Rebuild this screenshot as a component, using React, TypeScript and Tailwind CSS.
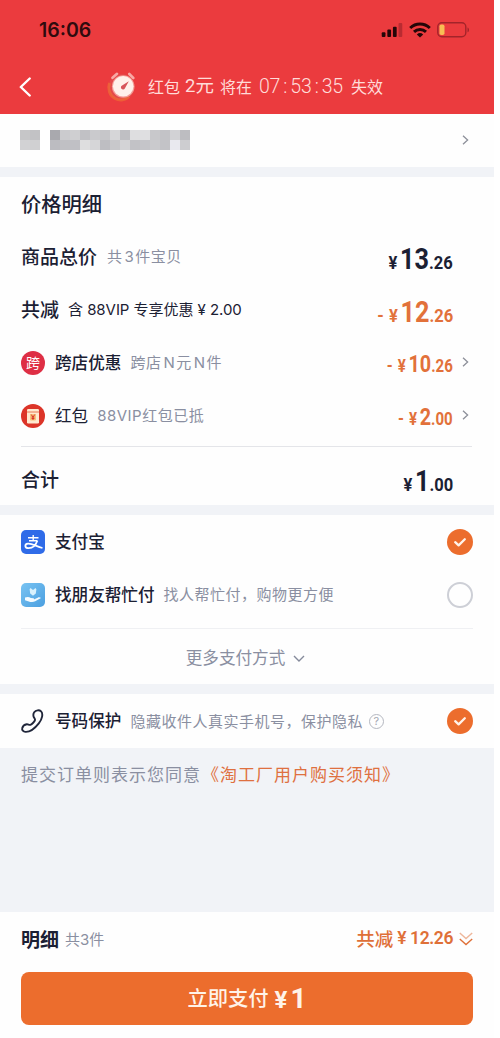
import type { ReactNode } from "react";

const MOSAIC = [
  ["#c6c6c8", "#c2c2c5", "#ffffff", "#a9a9ae", "#cbcbce", "#cfcfd1", "#c1c1c5", "#cacacd", "#c6c6c9", "#d6d6d8", "#bfbfc3", "#dedee0", "#dfdfe1", "#c8c8cb", "#c3c3c7", "#d2d2d5", "#bdbdc1"],
  ["#d2d2d4", "#d0d0d2", "#ffffff", "#bcbcc1", "#c0c0c4", "#c0c0c5", "#dededf", "#d6d6d8", "#bebec2", "#c8c8cb", "#d3d3d6", "#c2c2c6", "#c5c5c9", "#cacacd", "#c3c3c7", "#e9e9ef", "#cdcdd0"],
];

export default function App() {
  return (
    <div className="min-h-[1038px] w-[500px] bg-white font-['Inter','Noto_Sans_CJK_SC',sans-serif] text-[#1b2033]">
      <div className="flex h-[1038px] w-[494px] flex-col bg-[#f1f3f7]">
        <Header />

        {/* Address */}
        <div className="flex h-[53px] shrink-0 items-center justify-between bg-[#fefefe] pl-5 pr-[25px]">
          <div className="mb-0.5 grid grid-cols-[repeat(17,10px)]">
            {MOSAIC.flat().map((color, i) => (
              <div key={i} className="h-2.5" style={{ backgroundColor: color }} />
            ))}
          </div>
          <ChevronRight />
        </div>

        {/* Price details */}
        <section className="mt-2.5 h-[328px] shrink-0 bg-[#fefefe] pl-[21px] pr-[22px]">
          <div className="flex h-[53px] items-center pt-[3px] text-[20.3px] font-medium leading-none">价格明细</div>
          <Row>
            <Title>商品总价</Title>
            <Sub className="ml-[10px]">共<i className="ml-0.5 mr-px not-italic">3</i>件宝贝</Sub>
            <Price whole="13" cents=".26" />
          </Row>
          <Row>
            <Title>共减</Title>
            <span className="ml-[9px] whitespace-nowrap text-[15px] leading-none tracking-[-0.05px]">
              含 88VIP 专享优惠 ¥ 2.00
            </span>
            <Price minus whole="12" cents=".26" />
          </Row>
          <Row>
            <span className="flex size-6 items-center justify-center rounded-full bg-[#de2f45] text-[14px] leading-none text-white">
              跨
            </span>
            <Name>跨店优惠</Name>
            <Sub>跨店<i className="ml-0.5 mr-px not-italic">N</i>元<i className="ml-0.5 mr-px not-italic">N</i>件</Sub>
            <Price small minus arrow whole="10" cents=".26" />
          </Row>
          <Row>
            <RedPacketIcon />
            <Name regular>红包</Name>
            <Sub className="ml-[9px]">88VIP红包已抵</Sub>
            <Price small minus arrow whole="2" cents=".00" />
          </Row>
          <div className="mt-1 h-px bg-[#e4e5e9]" />
          <div className="flex h-[64px] items-center">
            <Title>合计</Title>
            <Price whole="1" cents=".00" />
          </div>
        </section>

        {/* Payment methods */}
        <section className="mt-2.5 h-[169px] shrink-0 bg-[#fefefe] pl-[21px] pr-[21px]">
          <Row>
            <AlipayIcon />
            <Name>支付宝</Name>
            <Checked />
          </Row>
          <Row>
            <FriendPayIcon />
            <Name>找朋友帮忙付</Name>
            <Sub>找人帮忙付，购物更方便</Sub>
            <span className="ml-auto size-[26px] rounded-full border-2 border-[#cdcfd6]" />
          </Row>
          <div className="mt-[7px] h-px bg-[#eff0f3]" />
          <div className="flex h-[59px] items-center justify-center pr-[3px] text-[16.6px] leading-none text-[#8a8fa1]">
            更多支付方式
            <svg className="ml-2 h-[7px] w-3" viewBox="0 0 12 7" fill="none" stroke="#858a9b" strokeWidth="1.4">
              <path d="M1 1l5 5 5-5" />
            </svg>
          </div>
        </section>

        {/* Number protection */}
        <section className="mt-2.5 flex h-[54px] shrink-0 items-center bg-[#fefefe] px-[21px]">
          <PhoneIcon />
          <Name>号码保护</Name>
          <Sub>隐藏收件人真实手机号，保护隐私</Sub>
          <span className="ml-[6px] flex size-[15px] shrink-0 items-center justify-center rounded-full border border-[#b4b7c0] text-[11px] leading-none text-[#a4a8b3]">
            ?
          </span>
          <Checked />
        </section>

        <p className="mt-[18px] flex whitespace-nowrap pl-[21px] text-[17px] leading-[18px] tracking-[1px] text-[#8a8fa1]">
          提交订单则表示您同意
          <span className="ml-px text-[#df7040]">《淘工厂用户购买须知》</span>
        </p>

        <Footer />
      </div>
    </div>
  );
}

function Header() {
  return (
    <header className="h-[114px] shrink-0 bg-[#eb3b3e]">
      <div className="flex h-[60px] items-center pl-[39px] pr-6">
        <span className="pt-px text-[19.5px] font-semibold leading-none text-[#300b0e]">16:06</span>
        <div className="ml-auto flex items-center">
          <svg className="h-[14px] w-[22px]" viewBox="0 0 22 15" fill="#240608">
            <rect x="0" y="10" width="4" height="5" rx="1" />
            <rect x="6" y="7" width="4" height="8" rx="1" />
            <rect x="12" y="4" width="4" height="11" rx="1" />
            <rect x="18" y="0" width="4" height="15" rx="1" fill="#b92b31" />
          </svg>
          <svg className="ml-[6px] h-[16px] w-[22px]" viewBox="0 0 22 16" fill="none" stroke="#240608" strokeWidth="2.9">
            <path d="M1.2 6a14 14 0 0 1 19.600 0" />
            <path d="M5 9.900a8.600 8.600 0 0 1 12 0" />
            <path d="M11 15.600l-3.200-3a4.700 4.700 0 0 1 6.400 0z" fill="#240608" stroke="none" />
          </svg>
          <svg className="ml-[6px] h-[16px] w-[33px]" viewBox="0 0 33 16">
            <rect x=".8" y=".8" width="28" height="14" rx="4" fill="none" stroke="#a3242a" strokeWidth="1.4" />
            <rect x="2.5" y="2.5" width="5" height="10.6" rx="1.8" fill="#f8bd54" />
            <path d="M30.500 5.500c2 .6 2 4.200 0 4.800z" fill="#a3242a" />
          </svg>
        </div>
      </div>
      <div className="flex h-[53px] items-center pl-[19px]">
        <svg className="h-5 w-3" viewBox="0 0 12 20" fill="none" stroke="#fff" strokeWidth="2.4" strokeLinecap="round" strokeLinejoin="round">
          <path d="M10.700 1.500L1.800 10l8.900 8.500" />
        </svg>
        <ClockIcon />
        <div className="ml-[12px] flex items-center whitespace-nowrap text-[16px] leading-none text-[#ffdcd9]">
          红包
          <span className="ml-[5px] flex items-center font-['Roboto','Noto_Sans_CJK_SC',sans-serif] text-[18.5px]">
            2元
          </span>
          <span className="ml-[6px]">将在</span>
          <span className="ml-[7px] flex w-[84px] justify-between font-['Roboto',sans-serif] text-[19.5px] font-light tracking-[-0.2px]">
            <span>07</span>
            <span>:</span>
            <span>53</span>
            <span>:</span>
            <span>35</span>
          </span>
          <span className="ml-[8px]">失效</span>
        </div>
      </div>
    </header>
  );
}

function Footer() {
  return (
    <footer className="mt-auto h-[126px] shrink-0 bg-[#fefefe] px-[21px]">
      <div className="flex h-[53px] items-center pt-px">
        <Title bold>明细</Title>
        <Sub className="ml-[6px]" tight>共3件</Sub>
        <span className="ml-auto flex items-center whitespace-nowrap text-[18.5px] font-medium leading-none text-[#df7038]">
          共减
          <span className="ml-[4px] font-['Roboto',sans-serif] text-[17.5px] font-semibold tracking-[-0.4px]">¥ 12.26</span>
        </span>
        <svg className="ml-[6px] h-[14px] w-[14px]" viewBox="0 0 14 14" fill="none" stroke="#df7038" strokeWidth="1.4">
          <path d="M.8 1L7 6.500 13.200 1" opacity=".5" />
          <path d="M.8 7L7 12.500 13.200 7" />
        </svg>
      </div>
      <button
        type="button"
        className="mt-[7px] flex h-[53px] w-full items-center justify-center rounded-lg bg-[#ec6d2d] pt-px text-[20.3px] font-medium leading-none text-[#fff3e8]"
      >
        立即支付
        <span className="ml-[6px] flex items-baseline font-['Roboto',sans-serif] text-[24px] font-bold">
          ¥<span className="ml-[3px] text-[28px]">1</span>
        </span>
      </button>
    </footer>
  );
}

function Row({ children }: { children: ReactNode }) {
  return <div className="flex h-[53px] items-center">{children}</div>;
}

function Title({ children, bold }: { children: ReactNode; bold?: boolean }) {
  return (
    <span className={`whitespace-nowrap pt-0.5 text-[19px] leading-none ${bold ? "font-bold" : "font-medium"}`}>
      {children}
    </span>
  );
}

function Name({ children, regular }: { children: ReactNode; regular?: boolean }) {
  return (
    <span
      className={`ml-[10px] whitespace-nowrap pt-px text-[16.6px] leading-none ${regular ? "font-normal" : "font-medium"}`}
    >
      {children}
    </span>
  );
}

function Sub({
  children,
  tight,
  className = "ml-[9px]",
}: {
  children: ReactNode;
  tight?: boolean;
  className?: string;
}) {
  return (
    <span
      className={`whitespace-nowrap text-[15px] leading-none text-[#8a8fa1] ${
        tight ? "tracking-normal" : "tracking-[0.5px]"
      } ${className}`}
    >
      {children}
    </span>
  );
}

function Price({
  whole,
  cents,
  minus,
  small,
  arrow,
}: {
  whole: string;
  cents: string;
  minus?: boolean;
  small?: boolean;
  arrow?: boolean;
}) {
  return (
    <div className={`ml-auto flex items-center ${arrow ? "pr-[3px]" : "pr-[19px]"}`}>
      <span
        className={`flex origin-right items-baseline whitespace-nowrap font-['Roboto',sans-serif] font-bold leading-none ${
          minus ? "text-[#e2713a]" : "text-[#1b2033]"
        } ${small ? "mt-[3px] scale-x-[0.86] text-[17.5px]" : "mt-[5px] scale-x-[0.87] text-[19px]"}`}
      >
        {minus && <span className="mr-[6px]">-</span>}
        <span>¥</span>
        <span className={small ? "ml-[3px] text-[23px]" : "ml-[3px] text-[29px]"}>{whole}</span>
        <span>{cents}</span>
      </span>
      {arrow && (
        <span className="ml-[9px]">
          <ChevronRight />
        </span>
      )}
    </div>
  );
}

function ChevronRight() {
  return (
    <svg className="mb-0.5 h-[10px] w-[7px]" viewBox="0 0 7 10" fill="none" stroke="#8d909a" strokeWidth="1.3">
      <path d="M1 .8L5.600 5 1 9.200" />
    </svg>
  );
}

function Checked() {
  return (
    <svg className="ml-auto size-[26px] shrink-0" viewBox="0 0 26 26">
      <circle cx="13" cy="13" r="13" fill="#ec6d2d" />
      <path d="M8.200 13.200l3.400 3.200 6.200-6.100" fill="none" stroke="#fff3ea" strokeWidth="2.3" strokeLinecap="round" strokeLinejoin="round" />
    </svg>
  );
}

function PhoneIcon() {
  return (
    <svg className="size-6 shrink-0" viewBox="0 0 24 24" fill="none" stroke="#20263a" strokeWidth="1.9" strokeLinejoin="round">
      <path d="M13.200 3.200C14.800 1 18.300.7 20.100 2.400c2.200 2.200 1.200 7.600-2.300 12C14 19.200 8.400 23.200 4.400 22.900c-2.200-.2-3.600-2-3.200-3.600.4-1.800 2.600-3.700 4.600-4 1.400-.2 2.200.9 3.600.5 1.600-.5 4.300-3.300 4.600-4.800.3-1.300-1.200-2.200-1.500-3.800-.3-1.400-.1-2.900.7-4z" />
    </svg>
  );
}

function ClockIcon() {
  return (
    <svg className="ml-[75px] h-[30px] w-[30px]" viewBox="0 0 30 30">
      <circle cx="15.5" cy="15" r="13" fill="#e5484a" />
      <path d="M3.500 11c-2 6 0 12.500 5.500 15.500 5 2.600 11 1.500 14-2" fill="none" stroke="#f07a32" strokeWidth="3" opacity=".55" />
      <path d="M6.500 5.800l4.500-4M23.300 2l4 4" stroke="#f7a9a5" strokeWidth="2.6" strokeLinecap="round" />
      <circle cx="17.2" cy="14.5" r="11.3" fill="#f59c96" />
      <circle cx="17.2" cy="14.3" r="10.3" fill="#fff0ea" />
      <path d="M22.800 9.200l-4 7.200a2.100 2.100 0 1 1-2.700-3z" fill="#d7545a" />
    </svg>
  );
}

function RedPacketIcon() {
  return (
    <svg className="size-6" viewBox="0 0 24 24">
      <circle cx="12" cy="12" r="12" fill="#dc3529" />
      <rect x="6" y="5" width="12" height="14.5" rx="1.2" fill="#ffe9cf" />
      <path d="M6 8h12" fill="none" stroke="#e77b56" strokeWidth="1" />
      <rect x="9" y="10" width="6" height="6.5" rx="1" fill="#f6c27a" />
      <path d="M10.200 10.500L12 13l1.800-2.500M12 13v3M10.600 13h2.800M10.600 14.500h2.800" fill="none" stroke="#dc3529" strokeWidth="1" />
    </svg>
  );
}

function AlipayIcon() {
  return (
    <svg className="size-6" viewBox="0 0 24 24" fill="none" stroke="#fff">
      <rect width="24" height="24" rx="5" fill="#2f6be8" stroke="none" />
      <path d="M7 7.700h10.500M12.200 5v5.600M8 10.700h8.400" strokeWidth="1.4" />
      <path d="M16.300 10.700c-1.500 4.300-5 7.400-8.600 7.400-4.300 0-4.300-4-.8-4.400 4-.4 8.500 2.800 14.600 4.300" strokeWidth="1.8" />
    </svg>
  );
}

function FriendPayIcon() {
  return (
    <svg className="size-6" viewBox="0 0 24 24">
      <defs>
        <linearGradient id="friend" x1="0" y1="0" x2="1" y2="1">
          <stop offset="0" stopColor="#78c3f2" />
          <stop offset="1" stopColor="#4b9fe0" />
        </linearGradient>
      </defs>
      <rect width="24" height="24" rx="5" fill="url(#friend)" />
      <path d="M9.500 5l2.500 2 2.500-2 .9 1.200-.6 4.200L12 12.800l-2.800-2.400-.6-4.200z" fill="#d8f1fd" />
      <path d="M4 14.600c2-.8 4.200-.8 5.800.3l2.700.3c1 .4.8 1.400-.3 1.500l4.500-2c1.200-.6 2.500-.3 3.300.3l-5.800 3.300c-1.800 1.100-4.800.9-6.400.1L4 17.200z" fill="#f4fbff" />
    </svg>
  );
}
